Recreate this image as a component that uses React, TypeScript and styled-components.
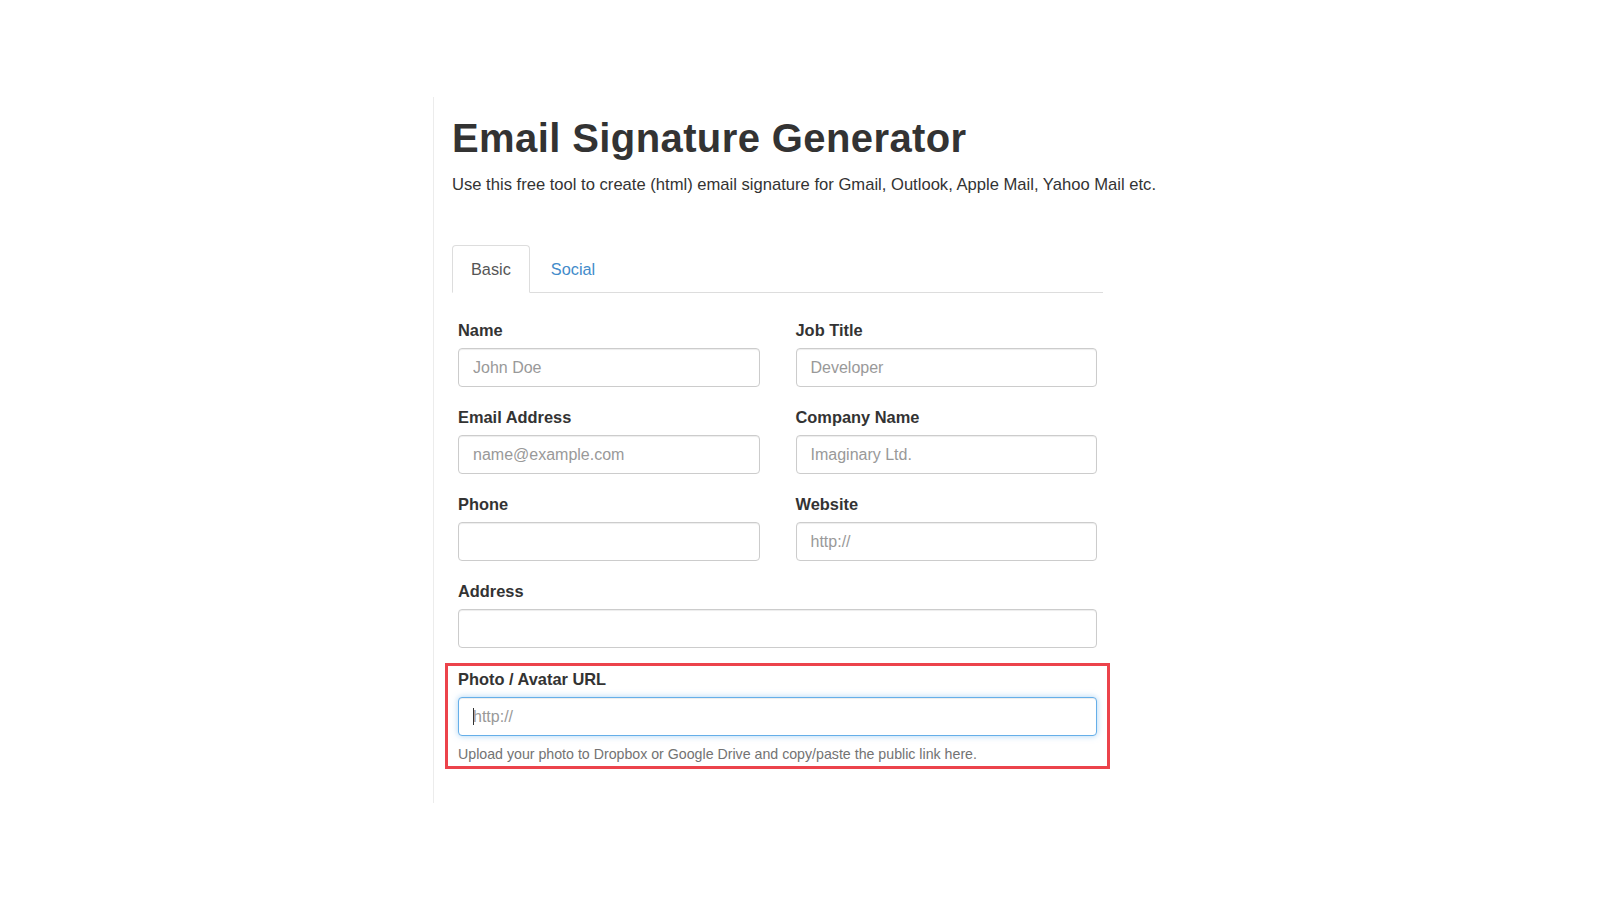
import React from "react";
import styled, { createGlobalStyle } from "styled-components";

const GlobalStyle = createGlobalStyle`
  body {
    margin: 0;
    background: #fff;
    font-family: "Liberation Sans", Arial, sans-serif;
    color: #333;
  }
`;

const Page = styled.div`
  display: flex;
  justify-content: center;
  padding-top: 97px;
`;

const Container = styled.div`
  box-sizing: border-box;
  width: 734px;
  height: 706px;
  border-left: 1px solid #ececec;
  padding-left: 18px;
`;

const Title = styled.h1`
  margin: 19px 0 0;
  font-size: 40px;
  line-height: 44px;
  font-weight: 700;
  letter-spacing: 0.4px;
  color: #333;
`;

const Lead = styled.p`
  margin: 13px 0 0;
  font-size: 16.6px;
  line-height: 24px;
  white-space: nowrap;
  color: #333;
`;

const TabList = styled.ul`
  display: flex;
  width: 651px;
  margin: 48px 0 0;
  padding: 0;
  list-style: none;
  border-bottom: 1px solid #ddd;
`;

const Tab = styled.li<{ $active?: boolean }>`
  box-sizing: border-box;
  height: 48px;
  margin-right: 2px;
  margin-bottom: -1px;
  padding: 0 18px;
  display: flex;
  align-items: center;
  font-size: 16.3px;
  border: 1px solid ${(p) => (p.$active ? "#ddd" : "transparent")};
  border-bottom-color: ${(p) => (p.$active ? "#fff" : "transparent")};
  border-radius: 4px 4px 0 0;
  background: ${(p) => (p.$active ? "#fff" : "transparent")};
  color: ${(p) => (p.$active ? "#555" : "#428bca")};
  cursor: pointer;
`;

const Form = styled.form`
  box-sizing: border-box;
  width: 651px;
  padding: 27px 6px 0;
  display: grid;
  grid-template-columns: 1fr 1fr;
  column-gap: 36px;
`;

const Group = styled.div<{ $wide?: boolean }>`
  grid-column: ${(p) => (p.$wide ? "1 / -1" : "auto")};
  margin-bottom: 20px;
`;

const Highlight = styled.div`
  grid-column: 1 / -1;
  margin: -5px -13px 0 -13px;
  padding: 3px 10px 2px;
  border: 3px solid #ec434b;
`;

const Label = styled.label`
  display: block;
  margin-bottom: 8px;
  font-size: 16.4px;
  line-height: 20px;
  font-weight: 700;
  color: #333;
`;

const Field = styled.div`
  position: relative;
`;

const Input = styled.input<{ $focus?: boolean }>`
  box-sizing: border-box;
  display: block;
  width: 100%;
  height: 39px;
  padding: 0 14px;
  font-family: "Liberation Sans", Arial, sans-serif;
  font-size: 16px;
  color: #555;
  background: #fff;
  border: 1px solid ${(p) => (p.$focus ? "#66afe9" : "#ccc")};
  border-radius: 4px;
  outline: none;
  box-shadow: ${(p) =>
    p.$focus
      ? "inset 0 1px 1px rgba(0,0,0,.075), 0 0 6px rgba(102,175,233,.55)"
      : "inset 0 1px 1px rgba(0,0,0,.075)"};

  &::placeholder {
    color: #999;
  }
`;

const Caret = styled.span`
  position: absolute;
  left: 15px;
  top: 11px;
  width: 1px;
  height: 17px;
  background: #333;
`;

const Help = styled.p`
  margin: 8px 0 0;
  font-size: 14.2px;
  line-height: 20px;
  color: #737373;
`;

const fields = [
  { label: "Name", placeholder: "John Doe" },
  { label: "Job Title", placeholder: "Developer" },
  { label: "Email Address", placeholder: "name@example.com" },
  { label: "Company Name", placeholder: "Imaginary Ltd." },
  { label: "Phone", placeholder: "" },
  { label: "Website", placeholder: "http://" },
];

export default function App() {
  return (
    <>
      <GlobalStyle />
      <Page>
        <Container>
          <Title>Email Signature Generator</Title>
          <Lead>
            Use this free tool to create (html) email signature for Gmail,
            Outlook, Apple Mail, Yahoo Mail etc.
          </Lead>
          <TabList>
            <Tab $active>Basic</Tab>
            <Tab>Social</Tab>
          </TabList>
          <Form onSubmit={(e) => e.preventDefault()}>
            {fields.map((f) => (
              <Group key={f.label}>
                <Label>{f.label}</Label>
                <Input type="text" placeholder={f.placeholder} />
              </Group>
            ))}
            <Group $wide>
              <Label>Address</Label>
              <Input type="text" />
            </Group>
            <Highlight>
              <Label>Photo / Avatar URL</Label>
              <Field>
                <Input type="text" placeholder="http://" $focus />
                <Caret />
              </Field>
              <Help>
                Upload your photo to Dropbox or Google Drive and copy/paste the
                public link here.
              </Help>
            </Highlight>
          </Form>
        </Container>
      </Page>
    </>
  );
}
